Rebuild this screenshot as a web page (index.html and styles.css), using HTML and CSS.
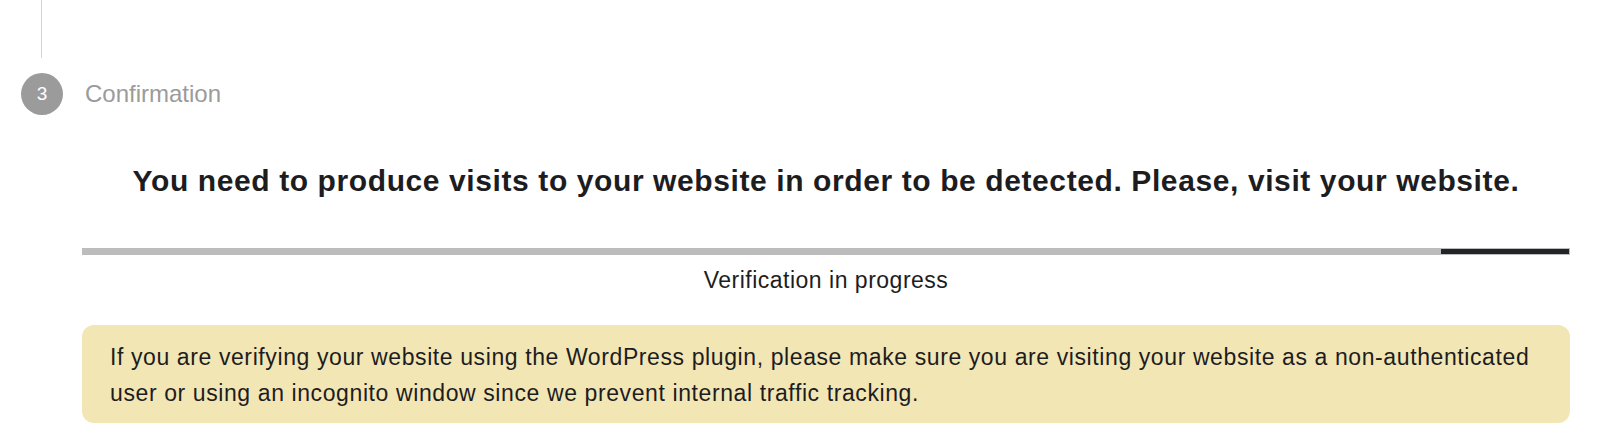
FILE: index.html
```html
<!DOCTYPE html>
<html lang="en">
<head>
    <meta charset="UTF-8">
    <meta name="viewport" content="width=device-width, initial-scale=1.0">
    <title>Confirmation</title>
    <link rel="stylesheet" href="styles.css">
</head>
<body>
    <div class="stepper">
        <div class="step-line"></div>
        <div class="step">
            <span class="step-number">3</span>
            <span class="step-title">Confirmation</span>
        </div>
    </div>

    <div class="step-content">
        <h2 class="detect-title">You need to produce visits to your website in order to be detected. Please, visit your website.</h2>

        <div class="progress">
            <div class="progress-bar"></div>
        </div>
        <p class="progress-label">Verification in progress</p>

        <div class="notice">
            If you are verifying your website using the WordPress plugin, please make sure you are visiting your website as a non-authenticated user or using an incognito window since we prevent internal traffic tracking.
        </div>
    </div>
</body>
</html>
```

FILE: styles.css
```css
body {
    margin: 0;
    font-family: "Liberation Sans", Arial, sans-serif;
    color: #1d1d1f;
    background: #fff;
}

.stepper {
    padding-left: 21px;
}

.step-line {
    width: 1px;
    height: 58px;
    margin-left: 20px;
    background-color: #d4d4d4;
}

.step {
    display: flex;
    align-items: center;
    margin-top: 15px;
}

.step-number {
    width: 42px;
    height: 42px;
    border-radius: 50%;
    background-color: #9b9b9b;
    color: #fff;
    font-size: 19px;
    display: flex;
    align-items: center;
    justify-content: center;
}

.step-title {
    margin-left: 22px;
    font-size: 24px;
    color: #9b9b9b;
}

.step-content {
    margin: 0 30px 0 82px;
}

.detect-title {
    margin: 48px 0 0;
    text-align: center;
    font-size: 30px;
    letter-spacing: 0.6px;
    font-weight: bold;
    line-height: 36px;
}

.progress {
    margin-top: 49px;
    height: 7px;
    background-color: #bcbcbc;
    display: flex;
    justify-content: flex-end;
}

.progress-bar {
    width: 128px;
    margin: 1px 0;
    background-color: #212529;
    border-right: 1px solid #bcbcbc;
}

.progress-label {
    margin: 11px 0 0;
    text-align: center;
    font-size: 23px;
    letter-spacing: 0.5px;
    line-height: 28px;
}

.notice {
    margin-top: 31px;
    padding: 14px 28px 12px;
    background-color: #f3e6b5;
    border-radius: 12px;
    font-size: 23px;
    letter-spacing: 0.6px;
    line-height: 36px;
    color: #1d1d1f;
}
```
